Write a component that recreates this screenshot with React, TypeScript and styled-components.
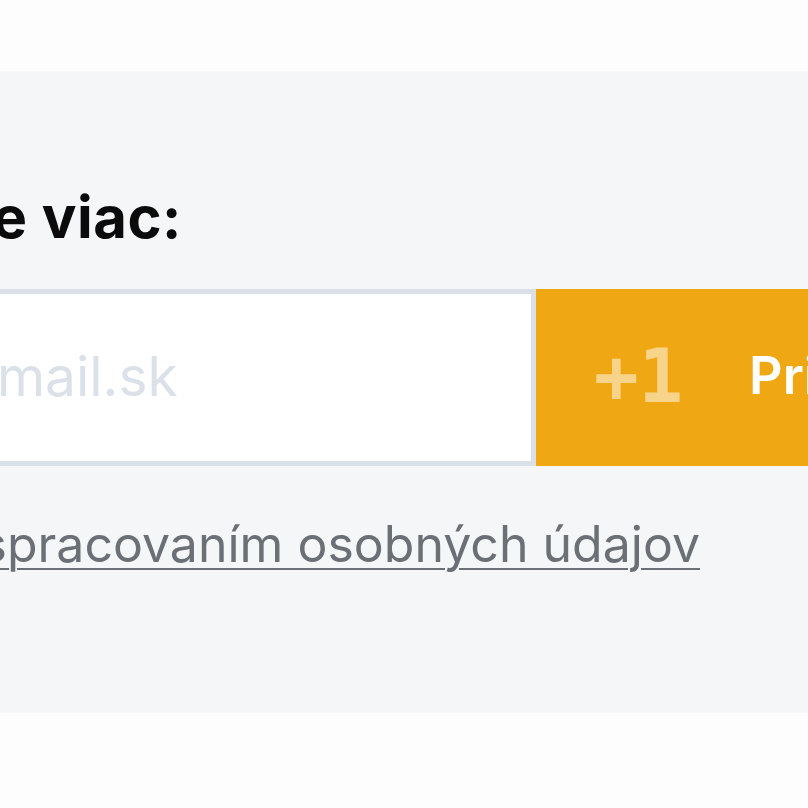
import React, { FC } from "react";
import styled, { createGlobalStyle } from "styled-components";

const GlobalStyle = createGlobalStyle`
  html, body {
    margin: 0;
    padding: 0;
    background: #fdfdfd;
    overflow: hidden;
  }
  body {
    font-family: Inter, "Open Sans", sans-serif;
  }
`;

const Page = styled.div`
  padding-top: 71px;
  height: 808px;
  box-sizing: border-box;
`;

const Band = styled.section`
  background: #f5f6f8;
  height: 642px;
  padding-top: 117px;
  box-sizing: border-box;
  overflow: hidden;
`;

const Content = styled.div`
  display: flex;
  flex-direction: column;
  align-items: flex-start;
`;

// lines whose start lies off the left edge, anchored by where they end
const EndAnchored = styled.div<{ $end: number }>`
  display: flex;
  justify-content: flex-end;
  width: ${(p) => p.$end}px;
  white-space: nowrap;
`;

const Heading = styled.h2`
  margin: 0;
  font-size: 58px;
  line-height: 58px;
  font-weight: 700;
  color: #0b0b0c;
  letter-spacing: 0.5px;
`;

const FormRow = styled.form`
  display: flex;
  height: 177px;
  margin-top: 43px;
  margin-left: -300px;
  width: 1200px;
`;

const EmailInput = styled.input`
  width: 836px;
  height: 100%;
  box-sizing: border-box;
  border: 5px solid #d9e0e8;
  background: #ffffff;
  padding: 0 0 4px 61px;
  font-family: Inter, "Open Sans", sans-serif;
  font-size: 55px;
  color: #333;
  outline: none;

  &::placeholder {
    color: #dbe1e9;
  }
`;

const SubmitButton = styled.button`
  flex: 1;
  display: flex;
  align-items: center;
  gap: 66px;
  padding: 0 0 4px 58px;
  border: none;
  background: #efa813;
  color: #ffffff;
  font-family: Inter, "Open Sans", sans-serif;
  font-size: 52px;
  font-weight: 600;
  cursor: pointer;
`;

const PlusOne = styled.span`
  font-family: "DejaVu Sans Mono", "Liberation Mono", monospace;
  font-weight: 700;
  font-size: 74px;
  color: rgba(255, 255, 255, 0.5);
`;

const ConsentLine = styled(EndAnchored)`
  margin-top: 47px;
`;

const ConsentLink = styled.a`
  font-size: 50px;
  line-height: 62px;
  color: #6b6f76;
  text-decoration: underline;
  text-decoration-thickness: 2px;
  text-underline-offset: 6px;
`;

const App: FC = () => {
  return (
    <>
      <GlobalStyle />
      <Page>
        <Band>
          <Content>
            <EndAnchored $end={182}>
              <Heading>Zistite viac:</Heading>
            </EndAnchored>
            <FormRow onSubmit={(e) => e.preventDefault()}>
              <EmailInput type="email" placeholder="meno@email.sk" />
              <SubmitButton type="submit">
                <PlusOne>+1</PlusOne>
                Prihlásiť
              </SubmitButton>
            </FormRow>
            <ConsentLine $end={700}>
              <ConsentLink href="#">Súhlasím so spracovaním osobných údajov</ConsentLink>
            </ConsentLine>
          </Content>
        </Band>
      </Page>
    </>
  );
};

export default App;
